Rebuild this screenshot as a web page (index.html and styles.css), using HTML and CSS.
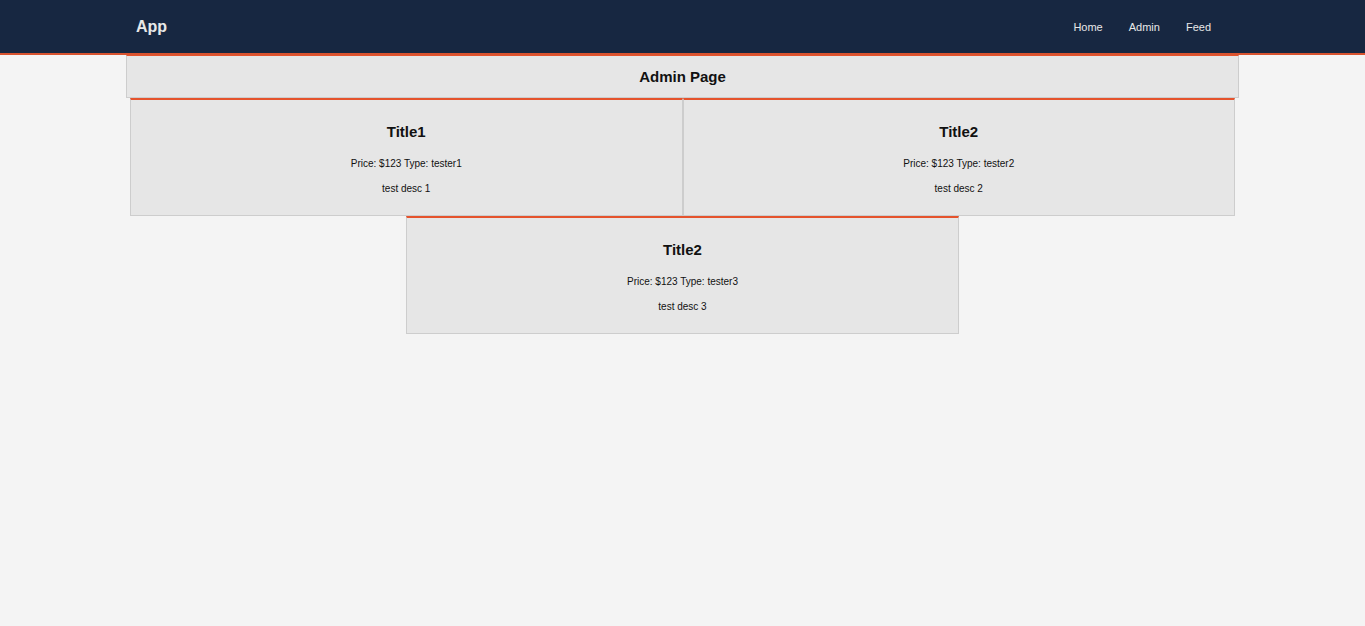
FILE: index.html
```html
<!DOCTYPE html>
<html lang="en">
<head>
  <meta charset="UTF-8" />
  <title>App</title>
  <meta name="viewport" content="width=device-width, initial-scale=1.0"/>
  <link rel="stylesheet" href="styles.css">
</head>
<body>

  <nav class="navbar">
    <div class="nav-inner">
      <a class="brand" href="#">App</a>
      <div class="nav-links">
        <a href="#">Home</a>
        <a href="#">Admin</a>
        <a href="#">Feed</a>
      </div>
    </div>
  </nav>

  <main class="container">
    <h1 class="page-title">Admin Page</h1>

    <div class="cards">
      <div class="card">
        <h2>Title1</h2>
        <p class="meta">Price: $123 Type: tester1</p>
        <p class="desc">test desc 1</p>
      </div>
      <div class="card">
        <h2>Title2</h2>
        <p class="meta">Price: $123 Type: tester2</p>
        <p class="desc">test desc 2</p>
      </div>
      <div class="card">
        <h2>Title2</h2>
        <p class="meta">Price: $123 Type: tester3</p>
        <p class="desc">test desc 3</p>
      </div>
    </div>
  </main>

</body>
</html>
```

FILE: styles.css
```css
body {
  margin: 0;
  background: #f4f4f4;
  color: #111;
  font-family: "Liberation Sans", Arial, sans-serif;
}

.navbar {
  background: #172741;
  height: 53px;
  border-bottom: 2px solid #d8532f;
}

.nav-inner {
  width: 1113px;
  margin: 0 auto;
  height: 100%;
  display: flex;
  align-items: center;
  justify-content: space-between;
  padding: 0 15px 0 10px;
  box-sizing: border-box;
}

.navbar a {
  color: #e8e8e8;
  text-decoration: none;
}

.brand {
  font-size: 16px;
  font-weight: bold;
}

.nav-links {
  display: flex;
}

.nav-links a {
  font-size: 11px;
  padding: 0 13px;
  margin-top: 1px;
}

.container {
  width: 1113px;
  margin: 0 auto;
}

.page-title {
  margin: 0;
  background: #e6e6e6;
  border: 1px solid #cdcdcd;
  border-top: 1px solid #e5532d;
  padding: 12px 0 11px;
  font-size: 15px;
  line-height: 18px;
  text-align: center;
}

.cards {
  display: flex;
  flex-wrap: wrap;
  justify-content: center;
  padding: 0 4px;
}

.card {
  width: 50%;
  box-sizing: border-box;
  background: #e6e6e6;
  border: 1px solid #cdcdcd;
  border-top: 2px solid #e5532d;
  text-align: center;
  padding-bottom: 20px;
}

.card h2 {
  margin: 23px 0 0;
  font-size: 15px;
  line-height: 18px;
}

.card p {
  margin: 0;
  font-size: 10px;
  line-height: 12px;
}

.card .meta {
  margin-top: 17px;
}

.card .desc {
  margin-top: 13px;
}
```
